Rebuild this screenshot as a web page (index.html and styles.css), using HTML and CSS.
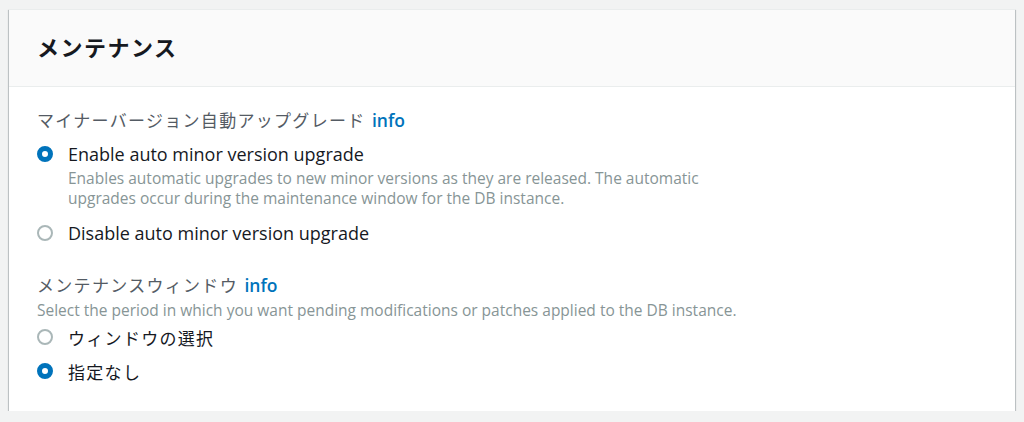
FILE: index.html
```html
<!DOCTYPE html>
<html lang="ja">
<head>
<meta charset="utf-8">
<link rel="stylesheet" href="styles.css">
</head>
<body>
<section class="card">
  <header class="card-header">
    <h2 class="card-title">メンテナンス</h2>
  </header>
  <div class="card-body">
    <div class="field">
      <div class="field-label"><span class="ja">マイナーバージョン自動アップグレード</span> <a class="info">info</a></div>
      <div class="options first">
        <label class="option">
          <span class="radio checked"></span>
          <span class="option-text">Enable auto minor version upgrade</span>
        </label>
        <p class="option-desc">Enables automatic upgrades to new minor versions as they are released. The automatic upgrades occur during the maintenance window for the DB instance.</p>
        <label class="option spaced">
          <span class="radio"></span>
          <span class="option-text">Disable auto minor version upgrade</span>
        </label>
      </div>
    </div>
    <div class="field second">
      <div class="field-label"><span class="ja">メンテナンスウィンドウ</span> <a class="info">info</a></div>
      <p class="field-desc">Select the period in which you want pending modifications or patches applied to the DB instance.</p>
      <div class="options">
        <label class="option">
          <span class="radio"></span>
          <span class="option-text ja">ウィンドウの選択</span>
        </label>
        <label class="option gap9">
          <span class="radio checked"></span>
          <span class="option-text ja">指定なし</span>
        </label>
      </div>
    </div>
  </div>
</section>
</body>
</html>
```
FILE: styles.css
```css
* { box-sizing: border-box; }
html, body { margin: 0; }
body {
  background: #f2f3f3;
  padding: 9px 9px 0 9px;
  font-family: "Open Sans", "Noto Sans CJK JP", sans-serif;
  color: #16191f;
}
.card {
  background: #ffffff;
  border-top: 1px solid #eaeded;
  box-shadow: 0 1px 1px 0 rgba(0, 28, 36, 0.5), 1px 1px 1px 0 rgba(0, 28, 36, 0.15), -1px 1px 1px 0 rgba(0, 28, 36, 0.15);
}
.card-header {
  background: #fafafa;
  border-bottom: 1px solid #eaeded;
  height: 77px;
  display: flex;
  align-items: center;
  padding: 0 28px 5px 28px;
}
.card-title {
  margin: 0;
  font-family: "Noto Sans CJK JP", sans-serif;
  font-size: 22px;
  font-weight: 700;
  letter-spacing: 1.5px;
  color: #16191f;
  line-height: 30px;
}
.card-body {
  padding: 21px 28px 28px 28px;
}
.ja {
  font-family: "Noto Sans CJK JP", sans-serif;
  font-size: 17px;
  letter-spacing: 1.3px;
}
.field-label {
  line-height: 24px;
  height: 24px;
  color: #545b64;
  font-size: 17px;
}
.info {
  color: #0073bb;
  font-family: "Open Sans", sans-serif;
  font-size: 17.5px;
  font-weight: 600;
  letter-spacing: 0;
  margin-left: 2px;
}
.options.first { margin-top: 10px; }
.option {
  display: flex;
  align-items: center;
  height: 24px;
  gap: 15px;
}
.option.spaced { margin-top: 13px; }
.option.gap9 { margin-top: 10px; }
.radio {
  width: 16px;
  height: 16px;
  border-radius: 50%;
  border: 2px solid #aab7b8;
  background: #fff;
  flex: none;
}
.radio.checked {
  border: 5px solid #0073bb;
  background: #fff;
}
.option-text {
  font-size: 18px;
  color: #16191f;
}
.option-text.ja {
  font-size: 17px;
  letter-spacing: 1.3px;
}
.option-desc {
  margin: 2px 0 0 31px;
  max-width: 640px;
  font-size: 15.5px;
  line-height: 20px;
  color: #879596;
}
.field.second { margin-top: 28px; }
.field-desc {
  margin: 3px 0 0 0;
  font-size: 15.5px;
  line-height: 20px;
  color: #879596;
}
.field.second .options { margin-top: 5px; }
```
